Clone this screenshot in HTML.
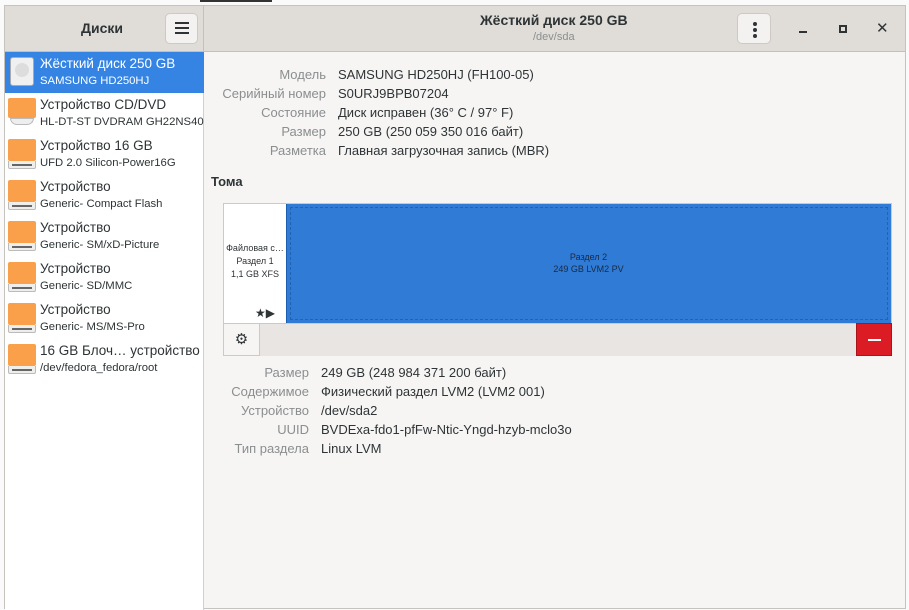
<!DOCTYPE html>
<html><head><meta charset="utf-8"><style>
*{margin:0;padding:0;box-sizing:border-box}
body{width:909px;height:607px;background:#fafafa;font-family:"Liberation Sans","DejaVu Sans",sans-serif;position:relative;overflow:hidden;color:#2e3436}
.a{position:absolute;white-space:nowrap}
#win{position:absolute;left:4px;top:5px;width:902px;height:604px;background:#f6f5f4;border:1px solid #c6c3be}
.hdr{position:absolute;left:0;top:0;width:900px;height:46px;background:#e0ddd9;border-bottom:1px solid #c3bfba}
.btn{position:absolute;background:#f3f2f0;border:1px solid #cdc9c4;border-radius:5px}
.side{position:absolute;left:0;top:46px;width:199px;height:558px;background:#fff;border-right:1px solid #d3cfca}
.it{position:absolute;left:0;width:199px;height:41px}
.it .t{position:absolute;left:35px;top:4px;font-size:13.5px;color:#2e3436}
.it .s{position:absolute;left:35px;top:23px;font-size:11.3px;color:#2e3436}
.ic{position:absolute;left:3px;top:5px;width:28px;height:30px}
.ic .o{position:absolute;left:0;top:0;width:28px;height:22px;background:#fba04a;border-radius:2px}
.ic .b{position:absolute;left:0;top:22px;width:28px;height:8px;background:#eeeeec;border:1px solid #bbb;border-top:none;border-radius:0 0 2px 2px}
.ic .b:after{content:"";position:absolute;left:3px;top:3px;width:20px;height:2px;background:#666}
.l{position:absolute;width:120px;text-align:right;font-size:13px;color:#8b8e8f}
.v{position:absolute;font-size:13px;color:#2e3436}
</style></head><body>
<div class="a" style="left:200px;top:0;width:72px;height:2px;background:#333"></div>
<div id="win">
<div class="hdr">
 <div class="a" style="left:0;top:0;width:199px;height:46px;border-right:1px solid #c3bfba"></div>
 <div class="a" style="left:76px;top:14px;font-size:14px;font-weight:bold">Диски</div>
 <div class="btn" style="left:160px;top:7px;width:33px;height:31px">
  <div class="a" style="left:9px;top:8px;width:14px;height:2px;background:#2e3436"></div>
  <div class="a" style="left:9px;top:13px;width:14px;height:2px;background:#2e3436"></div>
  <div class="a" style="left:9px;top:18px;width:14px;height:2px;background:#2e3436"></div>
 </div>
 <div class="a" style="left:475px;top:6px;font-size:14px;font-weight:bold">Жёсткий диск 250 GB</div>
 <div class="a" style="left:528px;top:25px;font-size:11px;color:#8b8e8f">/dev/sda</div>
 <div class="btn" style="left:732px;top:7px;width:34px;height:31px">
  <div class="a" style="left:15px;top:8px;width:4px;height:4px;border-radius:2px;background:#2e3436"></div>
  <div class="a" style="left:15px;top:14px;width:4px;height:4px;border-radius:2px;background:#2e3436"></div>
  <div class="a" style="left:15px;top:20px;width:4px;height:4px;border-radius:2px;background:#2e3436"></div>
 </div>
 <div class="a" style="left:794px;top:25px;width:8px;height:2px;background:#2e3436"></div>
 <div class="a" style="left:834px;top:19px;width:8px;height:8px;border:2px solid #2e3436"></div>
 <div class="a" style="left:871px;top:13px;font-size:15px;font-weight:bold">✕</div>
</div>
<div class="side">
 <div class="it" style="top:0;background:#3584e4">
  <div class="ic"><div class="a" style="left:2px;top:0;width:24px;height:29px;background:#f0f0f0;border:1px solid #aaa;border-radius:3px"></div><div class="a" style="left:7px;top:6px;width:14px;height:14px;border-radius:7px;background:#ddd"></div></div>
  <div class="t" style="color:#fff">Жёсткий диск 250 GB</div><div class="s" style="color:#fff">SAMSUNG HD250HJ</div></div>
 <div class="it" style="top:41px"><div class="ic"><div class="o" style="height:20px"></div><div class="a" style="left:2px;top:20px;width:24px;height:7px;background:#eee;border:1px solid #bbb;border-radius:0 0 10px 10px"></div></div><div class="t">Устройство CD/DVD</div><div class="s">HL-DT-ST DVDRAM GH22NS40</div></div>
 <div class="it" style="top:82px"><div class="ic"><div class="o"></div><div class="b"></div></div><div class="t">Устройство 16 GB</div><div class="s">UFD 2.0 Silicon-Power16G</div></div>
 <div class="it" style="top:123px"><div class="ic"><div class="o"></div><div class="b"></div></div><div class="t">Устройство</div><div class="s">Generic- Compact Flash</div></div>
 <div class="it" style="top:164px"><div class="ic"><div class="o"></div><div class="b"></div></div><div class="t">Устройство</div><div class="s">Generic- SM/xD-Picture</div></div>
 <div class="it" style="top:205px"><div class="ic"><div class="o"></div><div class="b"></div></div><div class="t">Устройство</div><div class="s">Generic- SD/MMC</div></div>
 <div class="it" style="top:246px"><div class="ic"><div class="o"></div><div class="b"></div></div><div class="t">Устройство</div><div class="s">Generic- MS/MS-Pro</div></div>
 <div class="it" style="top:287px"><div class="ic"><div class="o"></div><div class="b"></div></div><div class="t">16 GB Блоч… устройство</div><div class="s">/dev/fedora_fedora/root</div></div>
</div>
<div class="l" style="left:201px;top:61px">Модель</div><div class="v" style="left:333px;top:61px">SAMSUNG HD250HJ (FH100-05)</div>
<div class="l" style="left:201px;top:80px">Серийный номер</div><div class="v" style="left:333px;top:80px">S0URJ9BPB07204</div>
<div class="l" style="left:201px;top:99px">Состояние</div><div class="v" style="left:333px;top:99px">Диск исправен (36° C / 97° F)</div>
<div class="l" style="left:201px;top:118px">Размер</div><div class="v" style="left:333px;top:118px">250 GB (250 059 350 016 байт)</div>
<div class="l" style="left:201px;top:137px">Разметка</div><div class="v" style="left:333px;top:137px">Главная загрузочная запись (MBR)</div>
<div class="a" style="left:206px;top:168px;font-size:13px;font-weight:bold">Тома</div>
<div class="a" style="left:218px;top:197px;width:669px;height:153px;border:1px solid #cdc9c4;background:#fff"></div>
<div class="a" style="left:219px;top:198px;width:62px;height:119px;background:#fff;text-align:center;font-size:9px;line-height:13px;padding-top:38px;color:#2e3436">Файловая с…<br>Раздел 1<br>1,1 GB XFS</div>
<div class="a" style="left:250px;top:300px;font-size:12px">★▶</div>
<div class="a" style="left:281px;top:198px;width:605px;height:119px;background:#2f7bd6;border-left:1px solid #1c5fb0"><div class="a" style="left:3px;top:3px;right:3px;bottom:3px;border:1px dashed #2462ad"></div></div>
<div class="a" style="left:281px;top:245px;width:605px;text-align:center;font-size:9px;line-height:12px;color:#1a2a44">Раздел 2<br>249 GB LVM2 PV</div>
<div class="a" style="left:219px;top:317px;width:667px;height:33px;background:#e8e5e2;border-top:1px solid #cdc9c4"></div>
<div class="a" style="left:218px;top:317px;width:37px;height:33px;background:#f6f5f4;border:1px solid #cdc9c4;font-size:15px;text-align:center;line-height:31px">⚙</div>
<div class="a" style="left:851px;top:317px;width:36px;height:33px;background:#dc1c24;border:1px solid #a9141a"><div class="a" style="left:11px;top:15px;width:13px;height:2px;background:#fff"></div></div>
<div class="l" style="left:184px;top:359px">Размер</div><div class="v" style="left:316px;top:359px">249 GB (248 984 371 200 байт)</div>
<div class="l" style="left:184px;top:378px">Содержимое</div><div class="v" style="left:316px;top:378px">Физический раздел LVM2 (LVM2 001)</div>
<div class="l" style="left:184px;top:397px">Устройство</div><div class="v" style="left:316px;top:397px">/dev/sda2</div>
<div class="l" style="left:184px;top:416px">UUID</div><div class="v" style="left:316px;top:416px">BVDExa-fdo1-pfFw-Ntic-Yngd-hzyb-mclo3o</div>
<div class="l" style="left:184px;top:435px">Тип раздела</div><div class="v" style="left:316px;top:435px">Linux LVM</div>
</div>
</body></html>
